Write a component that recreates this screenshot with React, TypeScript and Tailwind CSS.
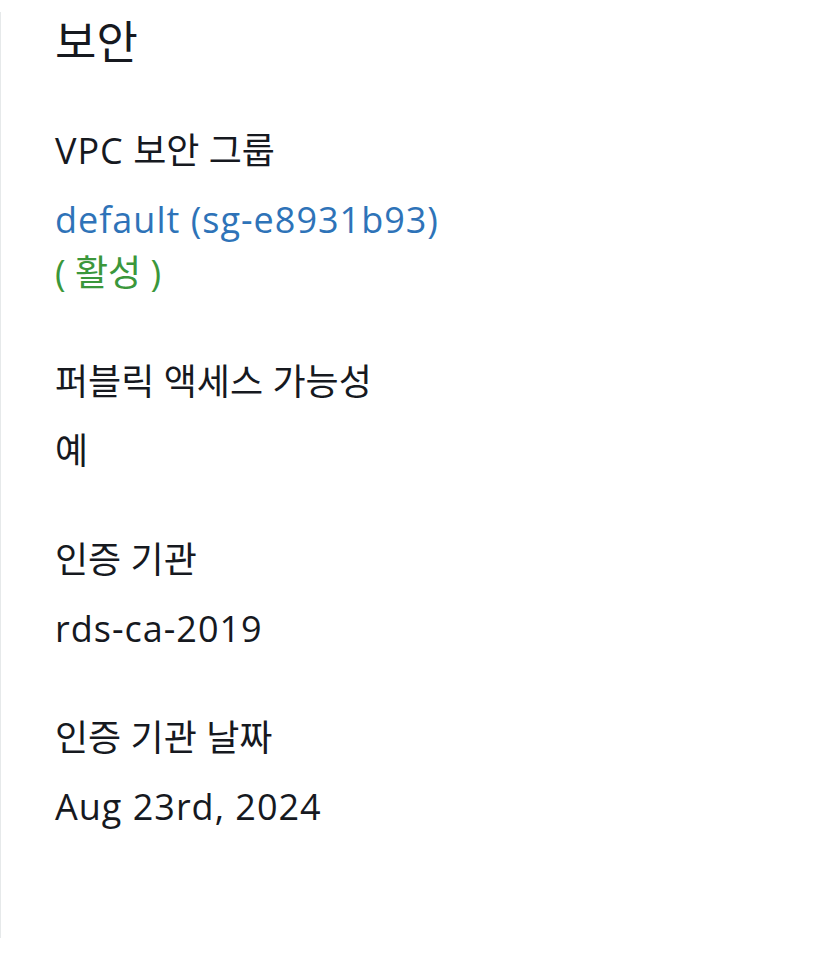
import React from "react";

const font = { fontFamily: '"Open Sans", "Noto Sans CJK KR", sans-serif' };

function Field({ label, children }: { label: React.ReactNode; children: React.ReactNode }) {
  return (
    <div className="flex flex-col">
      <div className="text-[36px] leading-[48px] text-[#16191f]">{label}</div>
      <div className="mt-[21px] text-[36px] leading-[48px] text-[#16191f]">{children}</div>
    </div>
  );
}

export default function App() {
  return (
    <div className="min-h-[980px] w-[820px] bg-white" style={font}>
      <div className="pt-[12px]">
        <div className="border-l border-[#e6e9ea] h-[926px] pl-[54px] pt-[2px]">
          <h1 className="text-[45px] leading-[56px] font-normal text-[#16191f]">보안</h1>
          <div className="mt-[57px] flex flex-col gap-[61px]">
            <Field label={<><span className="tracking-[1px]">VPC</span> 보안 그룹</>}>
              <div className="text-[#2e73b8] tracking-[1px]">default (sg-e8931b93)</div>
              <div className="mt-[5px] text-[#3b973b]">( 활성 )</div>
            </Field>
            <Field label="퍼블릭 액세스 가능성">예</Field>
            <Field label="인증 기관">
              <span className="tracking-[1px]">rds-ca-2019</span>
            </Field>
            <Field label="인증 기관 날짜">
              <span className="tracking-[1px]">Aug 23rd, 2024</span>
            </Field>
          </div>
        </div>
      </div>
    </div>
  );
}
